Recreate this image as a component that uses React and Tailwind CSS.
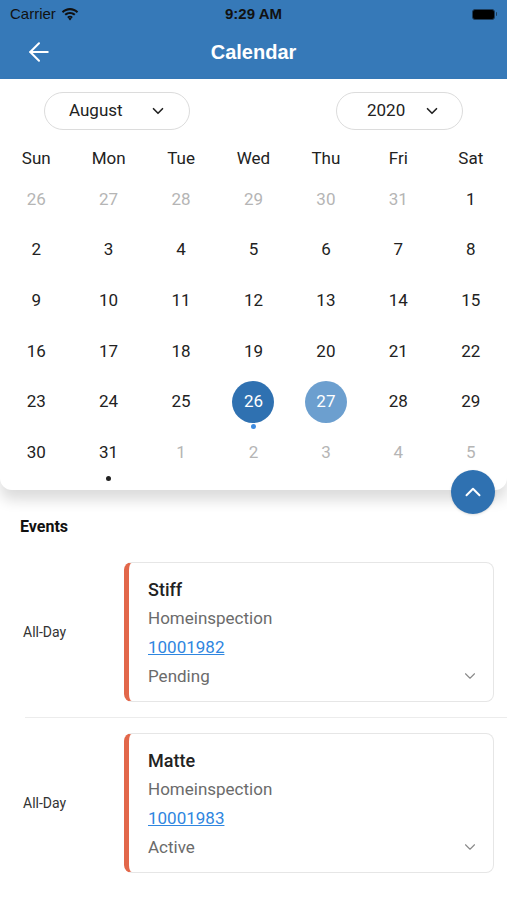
import { ChevronDown, ChevronUp, ArrowLeft } from 'lucide-react';

const WEEKDAYS = ['Sun', 'Mon', 'Tue', 'Wed', 'Thu', 'Fri', 'Sat'];

// semanas do mês de agosto 2020 (out = dia de outro mês)
const WEEKS = [
    [{ d: 26, out: true }, { d: 27, out: true }, { d: 28, out: true }, { d: 29, out: true }, { d: 30, out: true }, { d: 31, out: true }, { d: 1 }],
    [{ d: 2 }, { d: 3 }, { d: 4 }, { d: 5 }, { d: 6 }, { d: 7 }, { d: 8 }],
    [{ d: 9 }, { d: 10 }, { d: 11 }, { d: 12 }, { d: 13 }, { d: 14 }, { d: 15 }],
    [{ d: 16 }, { d: 17 }, { d: 18 }, { d: 19 }, { d: 20 }, { d: 21 }, { d: 22 }],
    [{ d: 23 }, { d: 24 }, { d: 25 }, { d: 26, selected: true, dot: 'blue' }, { d: 27, today: true }, { d: 28 }, { d: 29 }],
    [{ d: 30 }, { d: 31, dot: 'black' }, { d: 1, out: true }, { d: 2, out: true }, { d: 3, out: true }, { d: 4, out: true }, { d: 5, out: true }],
];

const EVENTS = [
    { id: 1, title: 'Stiff', tipo: 'Homeinspection', numero: '10001982', status: 'Pending' },
    { id: 2, title: 'Matte', tipo: 'Homeinspection', numero: '10001983', status: 'Active' },
];

function WifiIcon() {
    return (
        <svg width="18" height="13" viewBox="0 0 18 13" fill="#111">
            <path d="M9 2.2c2.6 0 5 1 6.8 2.7l1.4-1.5C15 1.3 12.1 0 9 0S3 1.3.8 3.4l1.4 1.5C4 3.2 6.4 2.2 9 2.2z" />
            <path d="M9 6c1.6 0 3 .6 4.1 1.6l1.4-1.5C13 4.7 11.1 3.9 9 3.9S5 4.7 3.5 6.1l1.4 1.5C6 6.6 7.4 6 9 6z" />
            <path d="M9 9.7c.7 0 1.3.3 1.7.7L9 12.4 7.3 10.4c.4-.4 1-.7 1.7-.7z" />
            <path d="M9 7.8c1.1 0 2.1.4 2.8 1.1l-1.1 1.3C10.3 9.7 9.7 9.5 9 9.5s-1.3.2-1.7.7L6.2 8.9C6.9 8.2 7.9 7.8 9 7.8z" />
        </svg>
    );
}

function DayCell({ day }) {
    let circle = '';
    let text = 'text-[#222]';
    if (day.out) text = 'text-[#b5b5b5]';
    if (day.selected) {
        circle = 'bg-[#2f71b1]';
        text = 'text-white';
    }
    if (day.today) {
        circle = 'bg-[#6c9fcf]';
        text = 'text-white';
    }
    return (
        <div className="relative flex h-[50.7px] items-center justify-center">
            <div className={`flex h-[42px] w-[42px] items-center justify-center rounded-full text-[17px] ${circle} ${text}`}>
                {day.d}
            </div>
            {day.dot === 'blue' && <span className="absolute bottom-[-2px] h-[5px] w-[5px] rounded-full bg-[#3d8be0]" />}
            {day.dot === 'black' && <span className="absolute bottom-[-3px] h-[5px] w-[5px] rounded-full bg-[#222]" />}
        </div>
    );
}

function EventRow({ item }) {
    return (
        <div className="flex items-center py-[15px] pr-[13px]">
            <div className="w-[124px] pl-[23px] text-[14px] text-[#333]">All-Day</div>
            <div className="flex-1 overflow-hidden rounded-lg border border-[#e6e6e6] border-l-[5px] border-l-[#e2674a] bg-white">
                <div className="flex items-end pl-[19px] pr-[14px] pt-[12px] pb-[10px]">
                    <div className="flex-1 leading-[29px]">
                        <div className="text-[18px] font-medium text-[#222]">{item.title}</div>
                        <div className="text-[17px] text-[#6b6b6b]">{item.tipo}</div>
                        <div className="text-[17px] text-[#2f86e0] underline">{item.numero}</div>
                        <div className="text-[17px] text-[#6b6b6b]">{item.status}</div>
                    </div>
                    <ChevronDown size={18} strokeWidth={1.5} className="mb-[6px] text-[#8a8a8a]" />
                </div>
            </div>
        </div>
    );
}

export default function App() {
    return (
        <div className="min-h-[900px] w-[507px] bg-white font-['Roboto',sans-serif]">
            {/* status bar + nav */}
            <div className="bg-[#3679b8]">
                <div className="flex h-[28px] items-center px-[10px] font-['Liberation_Sans',sans-serif] text-[15px] text-[#111]">
                    <div className="flex flex-1 items-center gap-[5px]">
                        <span>Carrier</span>
                        <WifiIcon />
                    </div>
                    <div className="font-bold">9:29 AM</div>
                    <div className="flex flex-1 justify-end">
                        <div className="flex items-center gap-[1px]">
                            <div className="h-[11px] w-[23px] rounded-[3px] border border-[#1d3d5c] bg-black" />
                            <div className="h-[4px] w-[1.5px] rounded-r bg-[#1d3d5c]" />
                        </div>
                    </div>
                </div>
                <div className="relative flex h-[51px] items-center justify-center pb-[4px]">
                    <ArrowLeft size={30} strokeWidth={1.6} className="absolute left-[24px] text-white" />
                    <h1 className="font-['Liberation_Sans',sans-serif] text-[20px] font-bold text-white">Calendar</h1>
                </div>
            </div>

            {/* calendário */}
            <div className="relative rounded-b-xl bg-white pb-[12px] shadow-[0_10px_14px_rgba(0,0,0,0.14)]">
                <div className="flex justify-between pt-[13px] pl-[44px] pr-[44px]">
                    <div className="flex h-[38px] w-[146px] items-center justify-between rounded-full border border-[#dcdcdc] pl-[24px] pr-[22px] text-[17px] text-[#222]">
                        <span>August</span>
                        <ChevronDown size={18} strokeWidth={2.2} />
                    </div>
                    <div className="flex h-[38px] w-[127px] items-center justify-between rounded-full border border-[#dcdcdc] pl-[30px] pr-[21px] text-[17px] text-[#222]">
                        <span>2020</span>
                        <ChevronDown size={18} strokeWidth={2.2} />
                    </div>
                </div>
                <div className="mt-[13px] grid grid-cols-7">
                    {WEEKDAYS.map((w) => (
                        <div key={w} className="flex h-[31px] items-center justify-center text-[17px] text-[#222]">{w}</div>
                    ))}
                </div>
                {WEEKS.map((week, i) => (
                    <div key={i} className="grid grid-cols-7">
                        {week.map((day, j) => (
                            <DayCell key={j} day={day} />
                        ))}
                    </div>
                ))}
                <button className="absolute right-[12px] bottom-[-24px] flex h-[44px] w-[44px] items-center justify-center rounded-full bg-[#2f71b1] text-white shadow">
                    <ChevronUp size={26} strokeWidth={1.8} />
                </button>
            </div>

            {/* eventos */}
            <div className="pt-[25px]">
                <h2 className="pl-[20px] text-[16px] font-bold text-[#111]">Events</h2>
                <div className="mt-[8px]">
                    {EVENTS.map((item, i) => (
                        <div key={item.id}>
                            {i > 0 && <div className="ml-[25px] h-px bg-[#ececec]" />}
                            <EventRow item={item} />
                        </div>
                    ))}
                </div>
            </div>
        </div>
    );
}
